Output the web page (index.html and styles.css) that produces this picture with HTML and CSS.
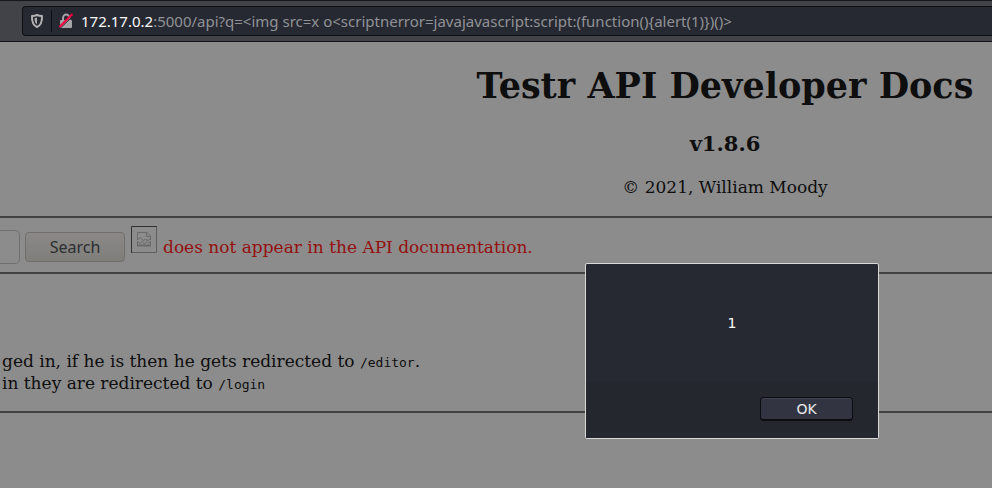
FILE: index.html
```html
<!DOCTYPE html>
<html lang="en">
<head>
<meta charset="utf-8">
<title>Testr API Developer Docs</title>
<link rel="stylesheet" href="styles.css">
</head>
<body>
<header class="toolbar">
  <div class="urlbar">
    <svg class="shield" width="14" height="16" viewBox="0 0 14 16" aria-hidden="true">
      <path d="M7 2C5.300 2.800 3.400 3 2 3.100C1.800 8 2.600 12 7 14C11.400 12 12.200 8 12 3.100C10.600 3 8.700 2.800 7 2Z" fill="none" stroke="#b1b1b3" stroke-width="2" stroke-linejoin="round"/>
      <path d="M7 4.500C6 5 5.200 5.100 4.600 5.200C4.600 8 5.200 10.200 7 11.300Z" fill="#b1b1b3"/>
    </svg>
    <span class="separator"></span>
    <svg class="lock" width="14" height="16" viewBox="0 0 14 16" aria-hidden="true">
      <path d="M4 7.500V5a3.200 3.400 0 0 1 6.400 0V7.500" fill="none" stroke="#a5a5a8" stroke-width="2"/>
      <rect x="1" y="7" width="12" height="8" rx="1" fill="#a5a5a8"/>
      <path d="M1 15.500L14.500 2.500" stroke="#272932" stroke-width="1"/>
      <path d="M0.500 14L13.500 1" stroke="#f4003f" stroke-width="2"/>
    </svg>
    <span class="url"><span class="host">172.17.0.2</span>:5000/api?q=&lt;img src=x o&lt;scriptnerror=javajavascript:script:(function(){alert(1)})()&gt;</span>
  </div>
</header>
<main class="page">
  <div class="masthead">
    <h1>Testr API Developer Docs</h1>
    <h2>v1.8.6</h2>
    <p>© 2021, William Moody</p>
  </div>
  <form class="search">
    <input class="query" type="text" aria-label="Search term">
    <button class="submit" type="button">Search</button>
    <svg class="broken" width="26" height="27" viewBox="0 0 26 27" role="img" aria-label="Missing image">
      <path d="M0.500 27V0.500H26" fill="none" stroke="#303030"/>
      <path d="M25.500 1V26.500H1" fill="none" stroke="#5e5e5e"/>
      <g fill="none" stroke="#6a6a6a">
        <path d="M6.500 14V6.500H16L19.500 10V14"/>
        <path d="M15.500 6.500V10.500H19.500"/>
        <path d="M6.500 13.500L9.500 11.500L12 14.500L14.500 13.500L17 14.500L19.500 12.500"/>
        <path d="M6.500 20V15.500L9 17.500L11 15.500L13.500 18L16 15.500L17.500 17L19.500 15.500V20"/>
        <path d="M6 19.500H20" stroke-width="2"/>
      </g>
    </svg>
    <span class="message">does not appear in the API documentation.</span>
  </form>
  <section class="docs">
    <p>ged in, if he is then he gets redirected to <code>/editor</code>.</p>
    <p>in they are redirected to <code>/login</code></p>
  </section>
</main>
<div class="dialog" role="alertdialog" aria-modal="true" aria-labelledby="alert-text">
  <p class="dialog-text" id="alert-text">1</p>
  <div class="dialog-actions"><button class="ok" type="button">OK</button></div>
</div>
</body>
</html>
```
FILE: styles.css
```css
* {
  box-sizing: border-box;
}

body {
  margin: 0;
  min-height: 100vh;
  background: #8c8c8c;
  color: #0e0e0e;
  font: 17px/22px "DejaVu Serif", serif;
  overflow-x: hidden;
}

h1, h2, p {
  margin: 0;
}

.toolbar {
  padding: 5px 0 5px 22px;
  background: #414349;
  border-top: 1px solid #16171c;
  border-bottom: 1px solid #121318;
}

.urlbar {
  display: flex;
  align-items: center;
  height: 30px;
  padding-left: 7px;
  background: #272932;
  border: 1px solid #0e0f13;
  border-right: 0;
  border-radius: 4px 0 0 4px;
  white-space: nowrap;
}

.separator {
  width: 1px;
  height: 22px;
  margin: 0 7px;
  background: #0e0f13;
}

.url {
  margin-left: 8px;
  color: #919297;
  font: 15px/20px "Noto Sans", sans-serif;
}

.host {
  color: #f9f9fa;
}

.masthead {
  padding: 22px 0 18px 458px;
  border-bottom: 2px solid #424242;
  text-align: center;
  white-space: nowrap;
}

h1 {
  font-size: 35px;
  line-height: 44px;
}

h2 {
  margin: 23px 0 19px;
  font-size: 21px;
  line-height: 26px;
}

.search {
  display: flex;
  align-items: flex-start;
  height: 56px;
  padding-top: 8px;
  border-bottom: 2px solid #424242;
}

.query {
  width: 20px;
  height: 34px;
  margin-top: 4px;
  background: #8c8c8c;
  border: 1px solid #726f6c;
  border-left: 0;
  border-radius: 0 5px 5px 0;
}

.submit {
  width: 100px;
  height: 30px;
  margin: 6px 6px 0 5px;
  padding: 0;
  background: linear-gradient(#8a8987, #807e7b);
  border: 1px solid #726e6a;
  border-radius: 4px;
  color: #2b2f31;
  font: 16px/22px "Noto Sans", sans-serif;
}

.message {
  margin: 10px 0 0 6px;
  color: #950f0f;
}

.docs {
  padding: 76px 0 17px 2px;
  border-bottom: 2px solid #424242;
}

code {
  font: 13px/16px "DejaVu Sans Mono", monospace;
}

.dialog {
  position: absolute;
  top: 263px;
  left: 585px;
  width: 294px;
  background: #272932;
  border: 1px solid #d8d8d8;
  border-radius: 2px;
  color: #f9f9fa;
  font: 14px/20px "DejaVu Sans", sans-serif;
}

.dialog-text {
  padding: 49px 0;
  text-align: center;
}

.dialog-actions {
  display: flex;
  justify-content: flex-end;
  padding: 15px 25px 17px;
  background: #25272f;
}

.ok {
  width: 93px;
  height: 24px;
  padding: 0;
  background: #323541;
  border: 1px solid #0c0d11;
  border-bottom-width: 2px;
  border-radius: 4px;
  box-shadow: inset 0 1px #41444f;
  color: #e9e9ec;
  font: inherit;
}
```
